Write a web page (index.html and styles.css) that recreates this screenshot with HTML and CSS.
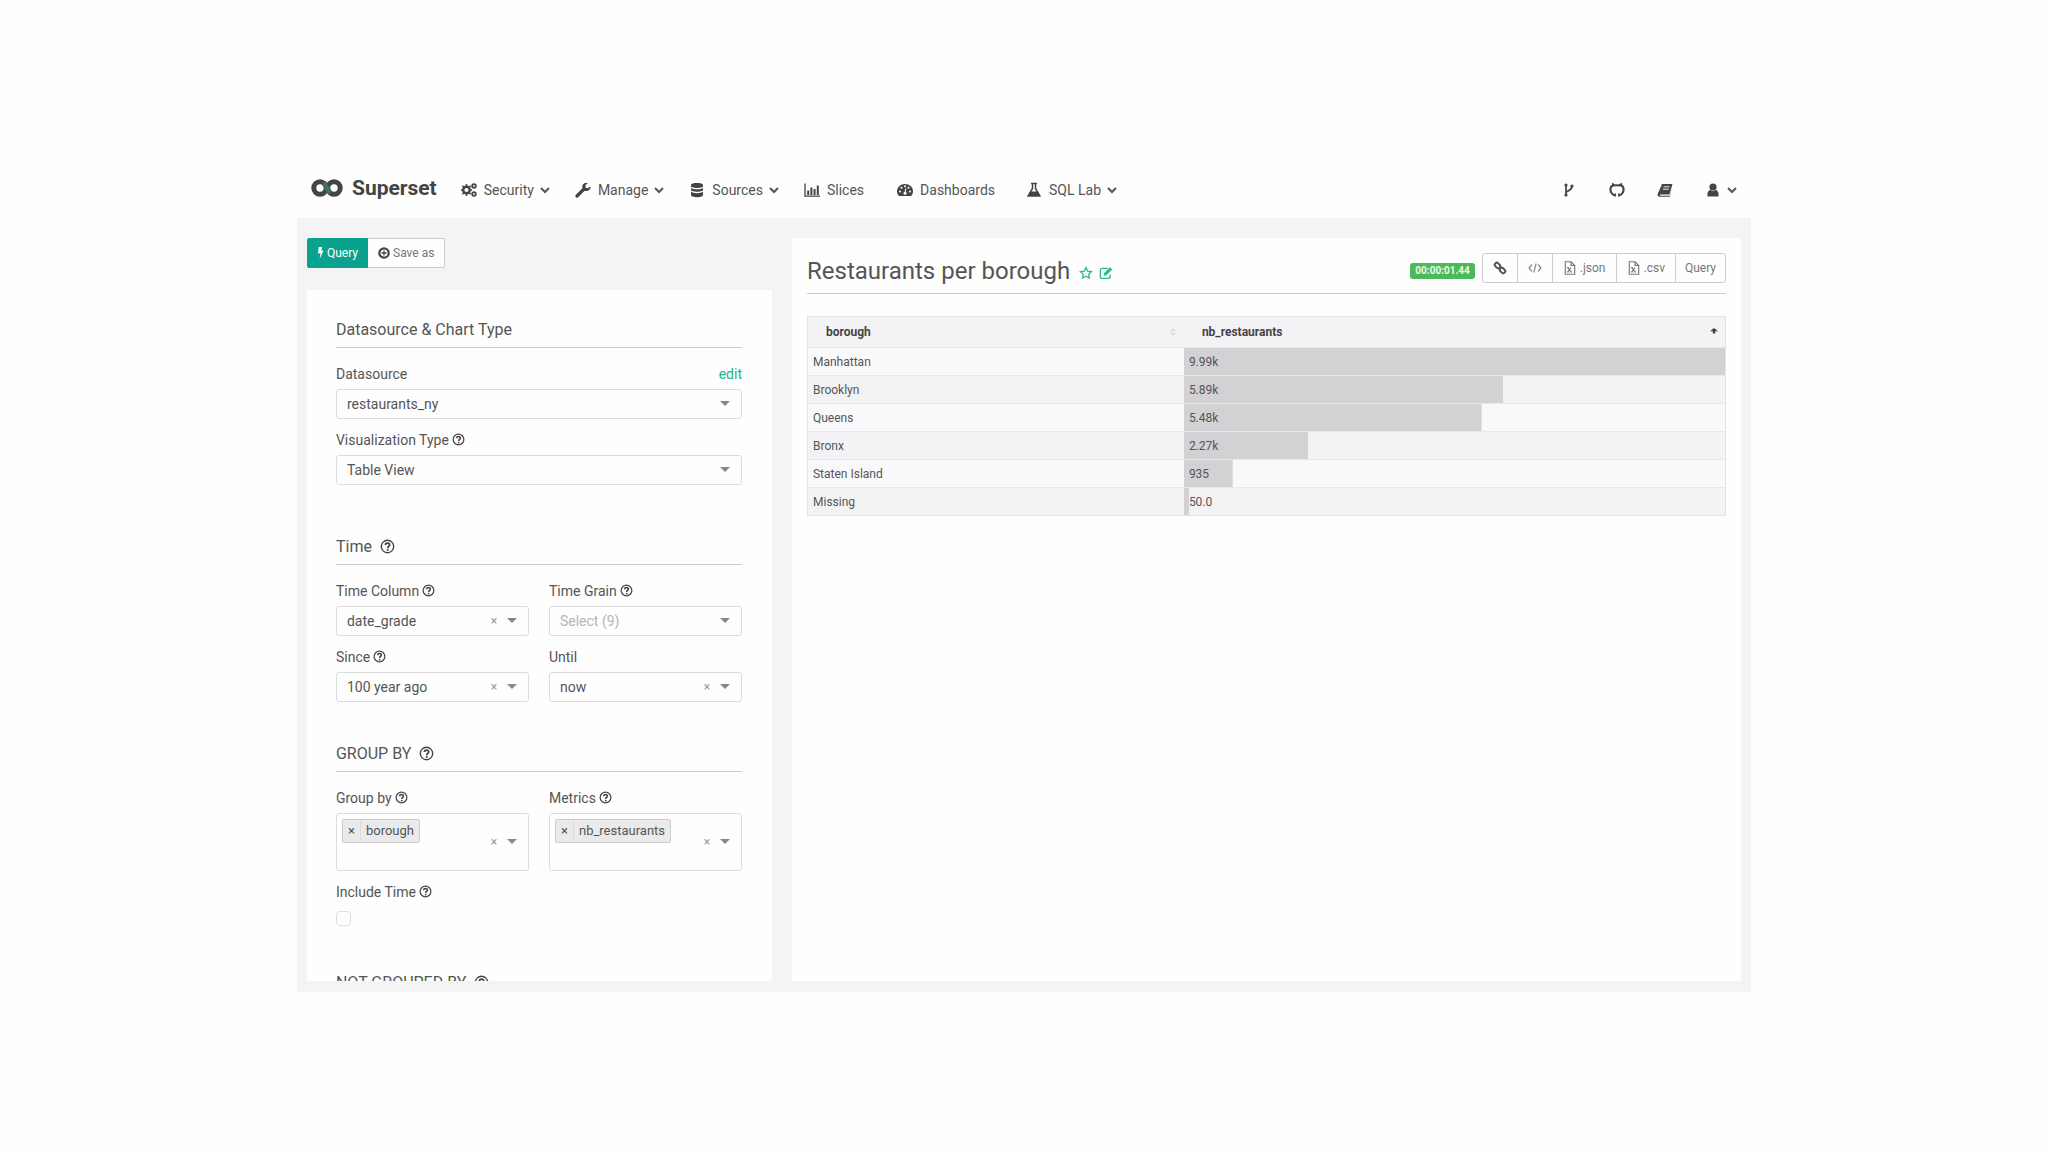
FILE: index.html
```html
<!DOCTYPE html>
<html lang="en">
<head>
<meta charset="utf-8">
<meta name="viewport" content="width=device-width, initial-scale=1">
<title>Superset - Restaurants per borough</title>
<link rel="stylesheet" href="styles.css">
</head>
<body>
<svg class="sprite" aria-hidden="true">
  <symbol id="help" viewBox="0 0 16 16"><circle cx="8" cy="8" r="6.6" fill="none" stroke="currentColor" stroke-width="1.5"/><path d="M5.8 6.4C5.8 3.6 10.4 3.7 10.3 6.3C10.2 7.8 8.2 7.9 8.2 9.8" fill="none" stroke="currentColor" stroke-width="1.9"/><circle cx="8.2" cy="11.8" r="1.1" fill="currentColor"/></symbol>
  <symbol id="chevron" viewBox="0 0 10 8"><path d="M1 2l4 4 4-4" fill="none" stroke="currentColor" stroke-width="2"/></symbol>
  <symbol id="caret" viewBox="0 0 10 6"><path d="M0 0h10L5 5z" fill="currentColor"/></symbol>
  <symbol id="file" viewBox="0 0 14 16"><path d="M1.6.8h6.6l4.2 4.2v10.2H1.6zM8.2.8V5h4.2" fill="none" stroke="currentColor" stroke-width="1.3"/><path d="M4.4 7.5l3.8 5M8.2 7.5l-3.8 5M3.6 7.5h2M3.6 12.5h2M7.5 12.5h2" stroke="currentColor" stroke-width="1.2"/></symbol>
</svg>
<div class="app">
  <header class="navbar">
    <a class="brand" href="#">
      <svg class="logo" viewBox="0 0 32 18" aria-hidden="true"><g fill="none" stroke-width="5"><circle cx="9" cy="9" r="6.2" stroke="#444"/><circle cx="23" cy="9" r="6.2" stroke="#444"/><path d="M12.5 3.9C15 5.800 17 12.200 19.500 14.100" stroke="#3e6f62"/></g></svg>
      <span>Superset</span>
    </a>
    <nav class="menu" aria-label="Main">
      <a class="security" href="#"><svg class="icon" viewBox="0 0 16 16"><circle cx="5.500" cy="8" r="3.300" fill="none" stroke="currentColor" stroke-width="2.400"/><path d="M5.500 2v2M5.500 12v2M0 8h2M9 8h2M1.300 3.800l1.500 1.500M8.200 10.700l1.500 1.500M9.700 3.800L8.200 5.300M1.300 12.200l1.500-1.500" stroke="currentColor" stroke-width="1.600"/><circle cx="13" cy="4" r="1.800" fill="none" stroke="currentColor" stroke-width="1.800"/><circle cx="13" cy="12" r="1.800" fill="none" stroke="currentColor" stroke-width="1.800"/></svg>Security<svg class="chev"><use href="#chevron"/></svg></a>
      <a class="manage" href="#"><svg class="icon" viewBox="0 0 16 16"><path d="M2 14l7-7" stroke="currentColor" stroke-width="3.200" stroke-linecap="round"/><path d="M12.800 1.200L10.500 3v2.400l2 .8 3-1.800c.4 3-2.500 5.300-5.500 4.300C6.500 7.500 6.500 2.600 9.500 1.300c1-.5 2.200-.5 3.300-.1z" fill="currentColor"/></svg>Manage<svg class="chev"><use href="#chevron"/></svg></a>
      <a class="sources" href="#"><svg class="icon" viewBox="0 0 16 16" fill="currentColor"><path d="M2 3c0-2.600 12-2.600 12 0v1.200c0 2.300-12 2.300-12 0zM2 6c2 1.800 10 1.800 12 0v2c0 2.300-12 2.300-12 0zM2 9.800c2 1.800 10 1.800 12 0V13c0 3-12 3-12 0z"/></svg>Sources<svg class="chev"><use href="#chevron"/></svg></a>
      <a class="slices" href="#"><svg class="icon" viewBox="0 0 16 16"><path d="M1 1.500v12.700h15" fill="none" stroke="currentColor" stroke-width="1.300"/><path d="M4.200 13V8.500M7.400 13V5.500M10.600 13V7M13.800 13V3.500" stroke="currentColor" stroke-width="2"/></svg>Slices</a>
      <a class="dashboards" href="#"><svg class="icon" viewBox="0 0 16 16"><path d="M1.800 14C-2.500 8.500 1.500 2 8 2s10.500 6.500 6.200 12z" fill="currentColor"/><g fill="#fff"><circle cx="3" cy="9.500" r="1"/><circle cx="4.500" cy="5.800" r="1"/><circle cx="8" cy="4.300" r="1"/><circle cx="11.500" cy="5.800" r="1"/><circle cx="13" cy="9.500" r="1"/></g><path d="M8.800 6.500L8 11" stroke="#fff" stroke-width="1.100"/><circle cx="8" cy="11.300" r="1.500" fill="#fff"/></svg>Dashboards</a>
      <a class="sqllab" href="#"><svg class="icon" viewBox="0 0 16 16"><path d="M5 1.500h6M6.500 2v4.500L2.200 13.800h11.600L9.500 6.500V2" fill="none" stroke="currentColor" stroke-width="1.500"/><path d="M4.500 9.500h7l3 5h-13z" fill="currentColor"/></svg>SQL Lab<svg class="chev"><use href="#chevron"/></svg></a>
    </nav>
    <nav class="tools" aria-label="Links">
      <a href="#" aria-label="Fork"><svg class="icon" viewBox="0 0 16 16"><path d="M5 3v10M5 10.500c1.500-2.500 6-1.500 6-6.500" fill="none" stroke="currentColor" stroke-width="1.700"/><circle cx="5" cy="3" r="1.600" fill="currentColor"/><circle cx="5" cy="13" r="1.600" fill="currentColor"/><circle cx="11" cy="4" r="1.600" fill="currentColor"/></svg></a>
      <a href="#" aria-label="GitHub"><svg class="icon" viewBox="0 0 16 16"><path d="M6 13.600C-.5 11.200 1 4 4 3.500l0-1 2 1q2-.5 4 0l2-1v1c3 .5 4.500 7.700-2 10.100" fill="none" stroke="currentColor" stroke-width="2.100"/><path d="M6.200 14.500v-3M9.800 14.500v-3" stroke="currentColor" stroke-width="1.500"/></svg></a>
      <a href="#" aria-label="Documentation"><svg class="icon" viewBox="0 0 16 16"><path d="M5 2h10.500l-3 10.500H3.500c-1 0-.8 1.300 0 1.300h9.500L15.500 5v0l-2.500 9.800H2.800C1 14.800.2 13.500.8 11.800z" fill="currentColor"/><path d="M6.500 4.800h6M5.800 7.200h6" stroke="#fff" stroke-width=".9"/></svg></a>
      <a href="#" aria-label="Account"><svg class="icon" viewBox="0 0 16 16" fill="currentColor"><circle cx="8" cy="5" r="3.600"/><path d="M2.500 14.500c-.5-4 1-6.500 3-6.500 1.500 1.300 3.500 1.300 5 0 2 0 3.500 2.500 3 6.500z"/></svg><svg class="chev"><use href="#chevron"/></svg></a>
    </nav>
  </header>

  <main class="explore">
    <aside class="side">
      <div class="actions">
        <button class="btn run" type="button"><svg viewBox="0 0 8 14"><path d="M2 0h4L5 4.500l2.500-.5L3 14l1-7-3 .6z" fill="currentColor"/></svg>Query</button>
        <button class="btn save" type="button"><svg class="plus" viewBox="0 0 12 12"><circle cx="6" cy="6" r="4.700" fill="none" stroke="currentColor" stroke-width="2.200"/><path d="M6 3.500v5M3.500 6h5" stroke="currentColor" stroke-width="1.300"/></svg>Save as</button>
      </div>
      <form class="panel">
        <section class="group">
          <h2>Datasource &amp; Chart Type</h2>
          <div class="field">
            <div class="label-row"><label for="datasource">Datasource</label><a href="#">edit</a></div>
            <div class="control"><select id="datasource"><option>restaurants_ny</option></select><svg class="caret"><use href="#caret"/></svg></div>
          </div>
          <div class="field">
            <div class="label-row"><label for="viz">Visualization Type</label><svg class="help"><use href="#help"/></svg></div>
            <div class="control"><select id="viz"><option>Table View</option></select><svg class="caret"><use href="#caret"/></svg></div>
          </div>
        </section>
        <section class="group compact">
          <h2>Time <svg class="help"><use href="#help"/></svg></h2>
          <div class="pair">
            <div class="field">
              <div class="label-row"><label for="timecol">Time Column</label><svg class="help"><use href="#help"/></svg></div>
              <div class="control"><select id="timecol"><option>date_grade</option></select><button class="clear" type="button" aria-label="Clear time column">×</button><svg class="caret"><use href="#caret"/></svg></div>
            </div>
            <div class="field">
              <div class="label-row"><label for="grain">Time Grain</label><svg class="help"><use href="#help"/></svg></div>
              <div class="control empty"><select id="grain"><option>Select (9)</option></select><svg class="caret"><use href="#caret"/></svg></div>
            </div>
            <div class="field">
              <div class="label-row"><label for="since">Since</label><svg class="help"><use href="#help"/></svg></div>
              <div class="control"><select id="since"><option>100 year ago</option></select><button class="clear" type="button" aria-label="Clear since">×</button><svg class="caret"><use href="#caret"/></svg></div>
            </div>
            <div class="field">
              <div class="label-row"><label for="until">Until</label></div>
              <div class="control"><select id="until"><option>now</option></select><button class="clear" type="button" aria-label="Clear until">×</button><svg class="caret"><use href="#caret"/></svg></div>
            </div>
          </div>
        </section>
        <section class="group fields">
          <h2>GROUP BY <svg class="help"><use href="#help"/></svg></h2>
          <div class="pair">
            <div class="field">
              <div class="label-row"><span>Group by</span><svg class="help"><use href="#help"/></svg></div>
              <div class="control multi"><div class="tokens"><span class="token"><button type="button" aria-label="Remove borough">×</button><span>borough</span></span></div><button class="clear" type="button" aria-label="Clear group by">×</button><svg class="caret"><use href="#caret"/></svg></div>
            </div>
            <div class="field">
              <div class="label-row"><span>Metrics</span><svg class="help"><use href="#help"/></svg></div>
              <div class="control multi"><div class="tokens"><span class="token"><button type="button" aria-label="Remove nb_restaurants">×</button><span>nb_restaurants</span></span></div><button class="clear" type="button" aria-label="Clear metrics">×</button><svg class="caret"><use href="#caret"/></svg></div>
            </div>
          </div>
          <div class="field">
            <div class="label-row"><label for="include">Include Time</label><svg class="help"><use href="#help"/></svg></div>
            <input class="check" id="include" type="checkbox">
          </div>
        </section>
        <section class="group">
          <h2>NOT GROUPED BY <svg class="help"><use href="#help"/></svg></h2>
        </section>
      </form>
    </aside>

    <section class="chart">
      <div class="chart-head">
        <h1>Restaurants per borough</h1>
        <a class="mark" href="#" aria-label="Favorite"><svg viewBox="0 0 16 16"><path d="M8 1.800l1.900 4 4.400.6-3.200 3 .8 4.400L8 11.700l-3.900 2.100.8-4.400-3.200-3 4.400-.6z" fill="none" stroke="currentColor" stroke-width="1.500"/></svg></a>
        <a class="mark" href="#" aria-label="Edit"><svg viewBox="0 0 16 16"><path d="M10 2.700H4C2.500 2.700 1.500 3.700 1.500 5v7c0 1.300 1 2.200 2.500 2.200h6.500c1.500 0 2.300-1 2.300-2.200V10" fill="none" stroke="currentColor" stroke-width="1.500"/><path d="M5.500 11l.4-3L12.500 1.500 15.200 4 8.500 10.600z" fill="currentColor"/></svg></a>
        <span class="timer">00:00:01.44</span>
        <div class="exports">
          <button class="btn" type="button" aria-label="Short link"><svg class="sq" viewBox="0 0 14 14"><g fill="none" stroke="currentColor" stroke-width="2"><rect x="1.500" y="2.500" width="6" height="4" rx="2" transform="rotate(45 4.500 4.500)"/><rect x="6.500" y="7.500" width="6" height="4" rx="2" transform="rotate(45 9.500 9.500)"/></g></svg></button>
          <button class="btn" type="button" aria-label="Embed"><svg class="sq" viewBox="0 0 14 14"><path d="M4 3.500L1 7l3 3.500M10 3.500L13 7l-3 3.500M8.200 2.500l-2.400 9" fill="none" stroke="#888" stroke-width="1.200"/></svg></button>
          <button class="btn file" type="button"><svg class="doc"><use href="#file"/></svg>.json</button>
          <button class="btn file" type="button"><svg class="doc"><use href="#file"/></svg>.csv</button>
          <button class="btn" type="button">Query</button>
        </div>
      </div>
      <table>
        <thead><tr><th class="name" scope="col"><div>borough<svg class="sort idle" viewBox="0 0 10 10"><path d="M5 0l4 4H1zM5 10l4-4H1z" fill="currentColor"/></svg></div></th><th scope="col"><div>nb_restaurants<svg class="sort" viewBox="0 0 10 10"><path d="M5 0L0 4h3.500v3h3V4H10z" fill="currentColor"/></svg></div></th></tr></thead>
        <tbody>
          <tr><td>Manhattan</td><td class="bar" style="--share:100%">9.99k</td></tr>
          <tr><td>Brooklyn</td><td class="bar" style="--share:59%">5.89k</td></tr>
          <tr><td>Queens</td><td class="bar" style="--share:55%">5.48k</td></tr>
          <tr><td>Bronx</td><td class="bar" style="--share:23%">2.27k</td></tr>
          <tr><td>Staten Island</td><td class="bar" style="--share:9%">935</td></tr>
          <tr><td>Missing</td><td class="bar" style="--share:1%">50.0</td></tr>
        </tbody>
      </table>
    </section>
  </main>
</div>
</body>
</html>
```
FILE: styles.css
```css
* { box-sizing: border-box; }

body {
  margin: 0;
  padding: 162px 14.5% 0;
  background: #fefefe;
  color: #555;
  font: 14px/20px Roboto, "Liberation Sans", sans-serif;
}

a { color: inherit; text-decoration: none; }
button, select { color: inherit; font: inherit; }
button { cursor: pointer; }
svg { flex: none; }
.sprite { display: none; }

/* navigation */
.navbar {
  display: flex;
  align-items: center;
  height: 56px;
  padding: 0 14px;
}
.brand {
  display: flex;
  align-items: center;
  gap: 9px;
  margin-right: 24px;
  padding-bottom: 4px;
  color: #444;
  font-size: 21px;
  font-weight: 700;
}
.logo { width: 32px; height: 18px; }
.menu { display: flex; gap: 25px; }
.menu a { display: flex; align-items: center; }
.icon { width: 16px; height: 16px; color: #444; }
.menu .icon { margin-right: 7px; }
.chev { width: 10px; height: 8px; margin-left: 6px; }
.menu .dashboards { margin: 0 6px 0 8px; }
.tools { display: flex; gap: 32px; margin-left: auto; }
.tools a { display: flex; align-items: center; }

/* page body */
.explore {
  display: grid;
  grid-template-columns: minmax(0, 49fr) minmax(0, 100fr);
  gap: 20px;
  padding: 20px 10px 11px;
  background: #f4f4f5;
}
.btn {
  display: flex;
  align-items: center;
  justify-content: center;
  gap: 3px;
  height: 30px;
  padding: 0 9px;
  border: 1px solid #ccc;
  background: #fefefe;
  color: #777;
  font-size: 12px;
}
.actions { display: flex; margin-bottom: 22px; }
.run { border-color: #0aa28c; border-radius: 2px 0 0 2px; background: #0aa28c; color: #fff; }
.run svg { width: 7px; height: 12px; }
.save { border-left: 0; border-radius: 0 2px 2px 0; padding: 0 10px; }
.save .plus { width: 12px; height: 12px; color: #444; }

.panel {
  height: 60vh;
  padding: 30px 30px 0 29px;
  overflow: hidden;
  background: #fefefe;
}
.group { margin-bottom: 52px; }
.group.compact { margin-bottom: 42px; }
.group.fields { margin-bottom: 47px; }
h2 {
  display: flex;
  align-items: center;
  gap: 8px;
  height: 28px;
  margin: 0 0 14px;
  padding-bottom: 8px;
  border-bottom: 1px solid #ccc;
  font-size: 16px;
  font-weight: 400;
}
.help { width: 13px; height: 13px; color: #444; }
h2 .help { width: 15px; height: 15px; }
.field { margin-bottom: 9px; min-width: 0; }
.pair .field { margin-bottom: 0; }
.pair { display: grid; grid-template-columns: 1fr 1fr; gap: 9px 20px; margin-bottom: 9px; }
.label-row { display: flex; align-items: center; gap: 3px; height: 27px; padding-bottom: 4px; }
.label-row a { margin-left: auto; color: #1fb08f; }
.control {
  display: flex;
  align-items: center;
  height: 30px;
  padding: 0 11px 0 10px;
  border: 1px solid #ddd;
  border-radius: 3px;
  color: #555;
}
.control select {
  flex: 1;
  min-width: 0;
  padding: 0;
  border: 0;
  background: none;
  appearance: none;
}
.control.empty select { color: #b5b5b5; }
.caret { width: 10px; height: 6px; color: #888; }
.clear, .token button { padding: 0; border: 0; background: none; }
.clear { width: 16px; margin-right: 5px; color: #999; font-size: 12px; }
.control.multi { height: 58px; padding-left: 5px; }
.tokens { display: flex; flex: 1; align-self: flex-start; padding-top: 5px; }
.token { display: flex; height: 24px; border: 1px solid #ccc; border-radius: 2px; background: #eaeaea; font-size: 13px; line-height: 22px; }
.token button { width: 18px; border-right: 1px solid #ddd; }
.token > span { padding: 0 5px; }
.check {
  display: block;
  width: 15px;
  height: 15px;
  margin: 4px 0 0;
  border: 1px solid #ddd;
  border-radius: 4px;
  background: #fefefe;
  appearance: none;
}

/* chart */
.chart { padding: 15px 15px 0; background: #fefefe; }
.chart-head {
  display: flex;
  align-items: center;
  height: 41px;
  margin-bottom: 22px;
  padding-bottom: 10px;
  border-bottom: 1px solid #ccc;
}
h1 { margin: 0 9px 0 0; padding-top: 5px; font-size: 24px; font-weight: 400; line-height: 30px; }
.mark { display: flex; margin: 9px 6px 0 0; color: #2db89a; }
.mark svg { width: 14px; height: 14px; }
.timer {
  margin: 6px 7px 0 auto;
  padding: 0 5px;
  border-radius: 3px;
  background: #4cb95a;
  color: #eafbe9;
  font-size: 10px;
  font-weight: 700;
  line-height: 16px;
}
.exports { display: flex; }
.exports .btn + .btn { margin-left: -1px; }
.exports .btn:first-child { border-radius: 3px 0 0 3px; }
.exports .btn:last-child { border-radius: 0 3px 3px 0; }
.exports .file { padding: 0 10px; }
.sq { width: 14px; height: 14px; margin: 0 1px; color: #555; }
.doc { width: 14px; height: 14px; }

table {
  width: 100%;
  border: 1px solid #e4e4e6;
  border-collapse: collapse;
  table-layout: fixed;
  font-size: 12px;
}
th { height: 31px; padding: 0 7px 0 18px; background: #f3f3f5; color: #444; text-align: left; }
th.name { width: 41%; }
th div { display: flex; align-items: center; justify-content: space-between; }
.sort { width: 8px; height: 10px; }
.sort.idle { color: #ddd; }
td { height: 28px; padding: 0 5px; border-top: 1px solid #e8e8ea; }
tbody tr { background: #f3f3f5; }
tbody tr:nth-child(odd) { background: #f9f9fb; }
.bar { background: linear-gradient(#d2d1d3, #d2d1d3) 0 0 / var(--share) 100% no-repeat; }
```
